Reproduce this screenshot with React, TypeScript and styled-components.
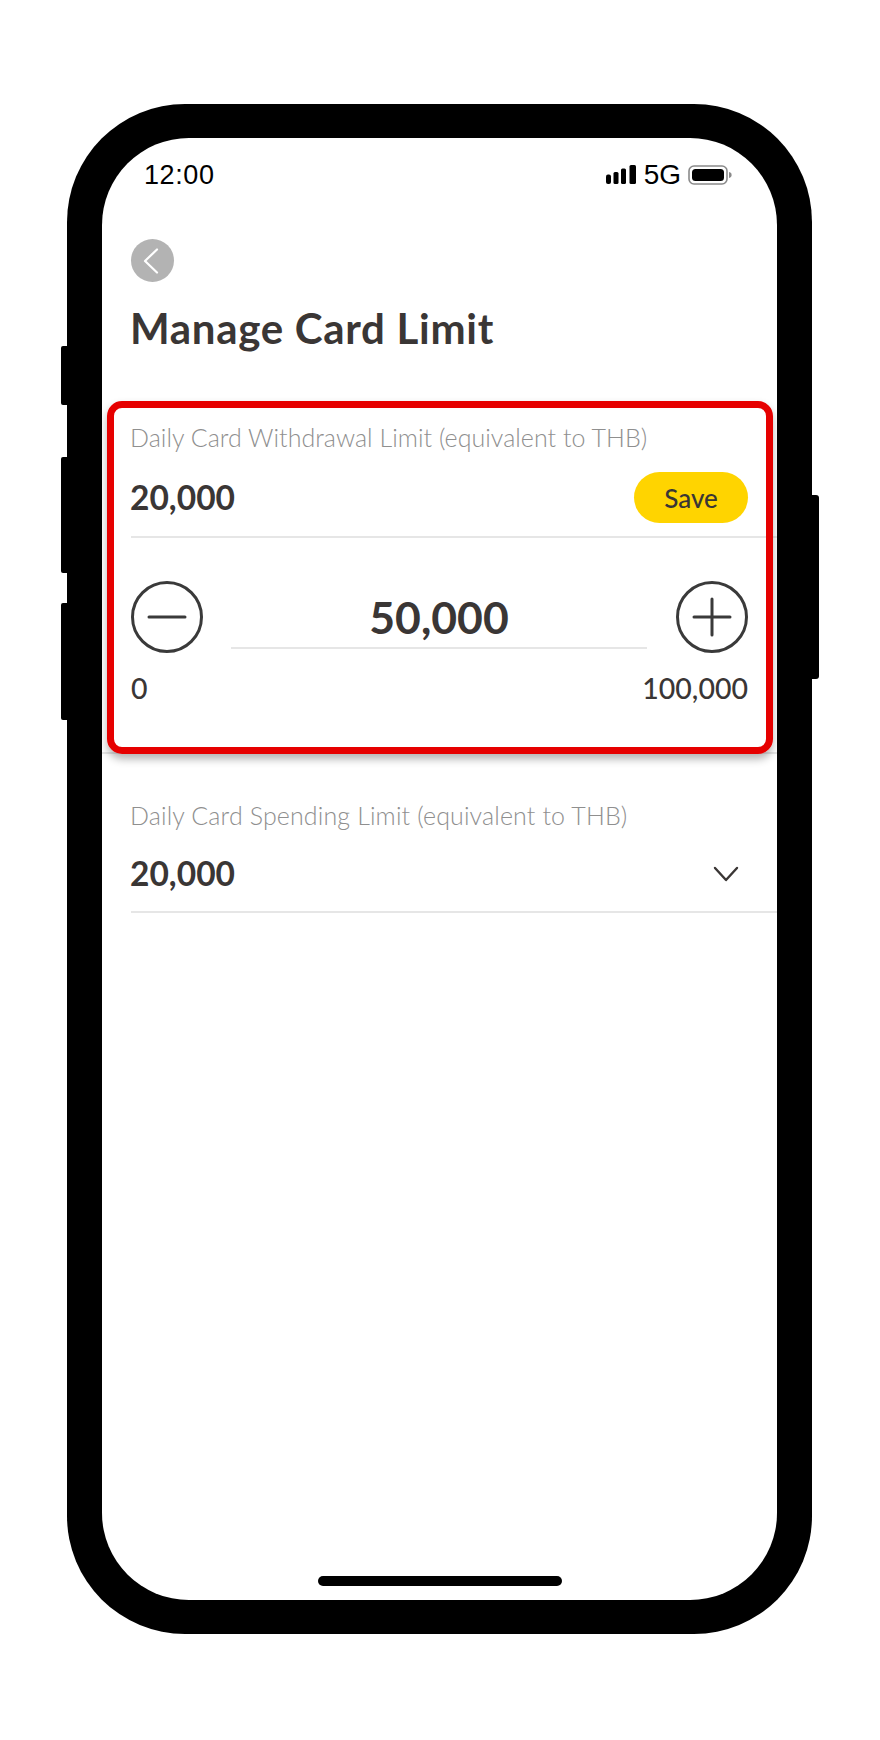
import React from "react";
import styled, { createGlobalStyle } from "styled-components";

const GlobalStyle = createGlobalStyle`
  html, body {
    margin: 0;
    background: #fff;
  }
  body {
    font-family: Lato, "Open Sans", sans-serif;
    color: #3a3635;
  }
`;

const Page = styled.div`
  width: 880px;
  height: 1740px;
  padding: 104px 0 0 67px;
  box-sizing: border-box;
  overflow: hidden;
`;

const Phone = styled.div`
  position: relative;
  width: 745px;
  height: 1530px;
  padding: 34px 35px;
  box-sizing: border-box;
  background: #000;
  border-radius: 118px;
`;

const SideButton = styled.span<{ $side: "left" | "right"; $top: number; $height: number }>`
  position: absolute;
  top: ${(p) => p.$top}px;
  height: ${(p) => p.$height}px;
  width: 7px;
  background: #000;
  ${(p) => (p.$side === "left" ? "left: -6px; border-radius: 2px 0 0 2px;" : "right: -7px; border-radius: 0 3px 3px 0;")}
`;

const Screen = styled.div`
  display: flex;
  flex-direction: column;
  height: 100%;
  background: #fff;
  border-radius: 87px;
  overflow: hidden;
`;

const StatusBar = styled.div`
  display: flex;
  align-items: center;
  justify-content: space-between;
  height: 73px;
  padding: 0 44px 0 42px;
  font-family: "Liberation Sans", Arial, sans-serif;
  color: #000;
`;

const Clock = styled.span`
  padding-top: 2px;
  font-size: 27px;
  letter-spacing: 0.6px;
`;

const StatusIcons = styled.div`
  display: flex;
  align-items: center;
`;

const Network = styled.span`
  margin: 0 7px 0 8px;
  font-size: 28px;
  line-height: 30px;
`;

const Content = styled.div`
  padding-left: 29px;
`;

const BackButton = styled.button`
  display: flex;
  align-items: center;
  justify-content: center;
  width: 43px;
  height: 43px;
  margin-top: 28px;
  padding: 0 4px 0 0;
  border: 0;
  border-radius: 50%;
  background: #b3b3b3;
`;

const Title = styled.h1`
  margin: 21px 0 0 -1px;
  font-size: 42px;
  line-height: 50px;
  font-weight: 700;
  letter-spacing: 0.7px;
`;

const LimitSection = styled.section`
  position: relative;
  margin-top: 48px;
  padding: 22px 0 47px 29px;
  border-bottom: 2px solid #e6e6e6;
`;

const Highlight = styled.div`
  position: absolute;
  top: 0;
  left: 5px;
  right: 4px;
  bottom: -2px;
  border: 7px solid #e60000;
  border-radius: 15px;
  box-shadow: 0 5px 8px rgba(0, 0, 0, 0.3);
  pointer-events: none;
`;

const Label = styled.div<{ $spacing?: number }>`
  margin-left: -1px;
  padding-bottom: 2px;
  font-size: 25px;
  line-height: 28px;
  font-weight: 300;
  letter-spacing: ${(p) => p.$spacing ?? 0}px;
  color: #8f8f8f;
`;

const ValueRow = styled.div<{ $height: number; $gapBelow: number }>`
  display: flex;
  align-items: center;
  justify-content: space-between;
  height: ${(p) => p.$height}px;
  margin-top: 19px;
  padding: 0 29px ${(p) => p.$gapBelow}px 0;
  border-bottom: 2px solid #e6e6e6;
`;

const Value = styled.span`
  margin: 0 0 2px -1px;
  font-size: 33.5px;
  font-weight: 700;
`;

const SaveButton = styled.button`
  width: 114px;
  height: 51px;
  padding: 0;
  border: 0;
  border-radius: 26px;
  background: #ffd400;
  color: #3a3635;
  font-family: inherit;
  font-size: 26px;
  font-weight: 500;
`;

const ChevronSlot = styled.span`
  display: flex;
  margin-right: 9px;
`;

const Stepper = styled.div`
  display: flex;
  justify-content: space-between;
  margin-top: 43px;
  padding-right: 29px;
`;

const Amount = styled.div`
  width: 416px;
  height: 68px;
  margin-left: -1px;
  padding-top: 4px;
  box-sizing: border-box;
  border-bottom: 2px solid #e6e6e6;
  font-size: 44.5px;
  line-height: 64px;
  font-weight: 700;
  text-align: center;
`;

const Range = styled.div`
  display: flex;
  justify-content: space-between;
  margin-top: 18px;
  padding-right: 29px;
  font-size: 28.5px;
  line-height: 34px;
  font-weight: 500;
`;

const PlainSection = styled.section`
  padding: 47px 0 0 29px;
`;

const HomeIndicator = styled.div`
  align-self: center;
  width: 244px;
  height: 10px;
  margin-top: auto;
  margin-bottom: 14px;
  border-radius: 5px;
  background: #000;
`;

const SignalIcon = () => (
  <svg width="30" height="19" viewBox="0 0 30 19" fill="#000">
    <rect x="0" y="9.5" width="5" height="9.5" rx="2" />
    <rect x="7.5" y="7" width="5" height="12" rx="1.5" />
    <rect x="15" y="3.5" width="5" height="15.5" rx="1.5" />
    <rect x="23.5" y="0" width="6.5" height="19" rx="1.5" />
  </svg>
);

const BatteryIcon = () => (
  <svg width="45" height="20" viewBox="0 0 45 20">
    <rect x="1" y="1" width="38" height="18" rx="5" fill="none" stroke="#8a8a8a" strokeWidth="1.6" />
    <rect x="4" y="4" width="32" height="12" rx="3.5" fill="#000" />
    <path d="M41 7c2 .4 2.6 1.6 2.6 3s-.6 2.6-2.6 3z" fill="#8a8a8a" />
  </svg>
);

const BackIcon = () => (
  <svg width="16" height="26" viewBox="0 0 16 26" fill="none" stroke="#fff" strokeWidth="2.2" strokeLinecap="round" strokeLinejoin="round">
    <path d="M14 1.5 2 13l12 11.5" />
  </svg>
);

const ChevronDownIcon = () => (
  <svg width="26" height="16" viewBox="0 0 26 16" fill="none" stroke="#3a3635" strokeWidth="2.4" strokeLinecap="round" strokeLinejoin="round">
    <path d="M2 2l11 12L24 2" />
  </svg>
);

const MinusIcon = () => (
  <svg width="72" height="72" viewBox="0 0 72 72" fill="none" stroke="#3a3a3a" strokeWidth="3" strokeLinecap="round">
    <circle cx="36" cy="36" r="34.5" />
    <path d="M18 36h36" />
  </svg>
);

const PlusIcon = () => (
  <svg width="72" height="72" viewBox="0 0 72 72" fill="none" stroke="#3a3a3a" strokeWidth="3" strokeLinecap="round">
    <circle cx="36" cy="36" r="34.5" />
    <path d="M18 36h36M36 18v36" />
  </svg>
);

export default function App() {
  return (
    <>
      <GlobalStyle />
      <Page>
        <Phone>
          <SideButton $side="left" $top={242} $height={59} />
          <SideButton $side="left" $top={353} $height={116} />
          <SideButton $side="left" $top={499} $height={117} />
          <SideButton $side="right" $top={391} $height={184} />
          <Screen>
            <StatusBar>
              <Clock>12:00</Clock>
              <StatusIcons>
                <SignalIcon />
                <Network>5G</Network>
                <BatteryIcon />
              </StatusIcons>
            </StatusBar>
            <Content>
              <BackButton aria-label="Back">
                <BackIcon />
              </BackButton>
              <Title>Manage Card Limit</Title>
            </Content>
            <LimitSection>
              <Label $spacing={0.03}>Daily Card Withdrawal Limit (equivalent to THB)</Label>
              <ValueRow $height={51} $gapBelow={13}>
                <Value>20,000</Value>
                <SaveButton>Save</SaveButton>
              </ValueRow>
              <Stepper>
                <MinusIcon />
                <Amount>50,000</Amount>
                <PlusIcon />
              </Stepper>
              <Range>
                <span>0</span>
                <span>100,000</span>
              </Range>
              <Highlight />
            </LimitSection>
            <PlainSection>
              <Label $spacing={0.13}>Daily Card Spending Limit (equivalent to THB)</Label>
              <ValueRow $height={47} $gapBelow={14}>
                <Value>20,000</Value>
                <ChevronSlot>
                  <ChevronDownIcon />
                </ChevronSlot>
              </ValueRow>
            </PlainSection>
            <HomeIndicator />
          </Screen>
        </Phone>
      </Page>
    </>
  );
}
